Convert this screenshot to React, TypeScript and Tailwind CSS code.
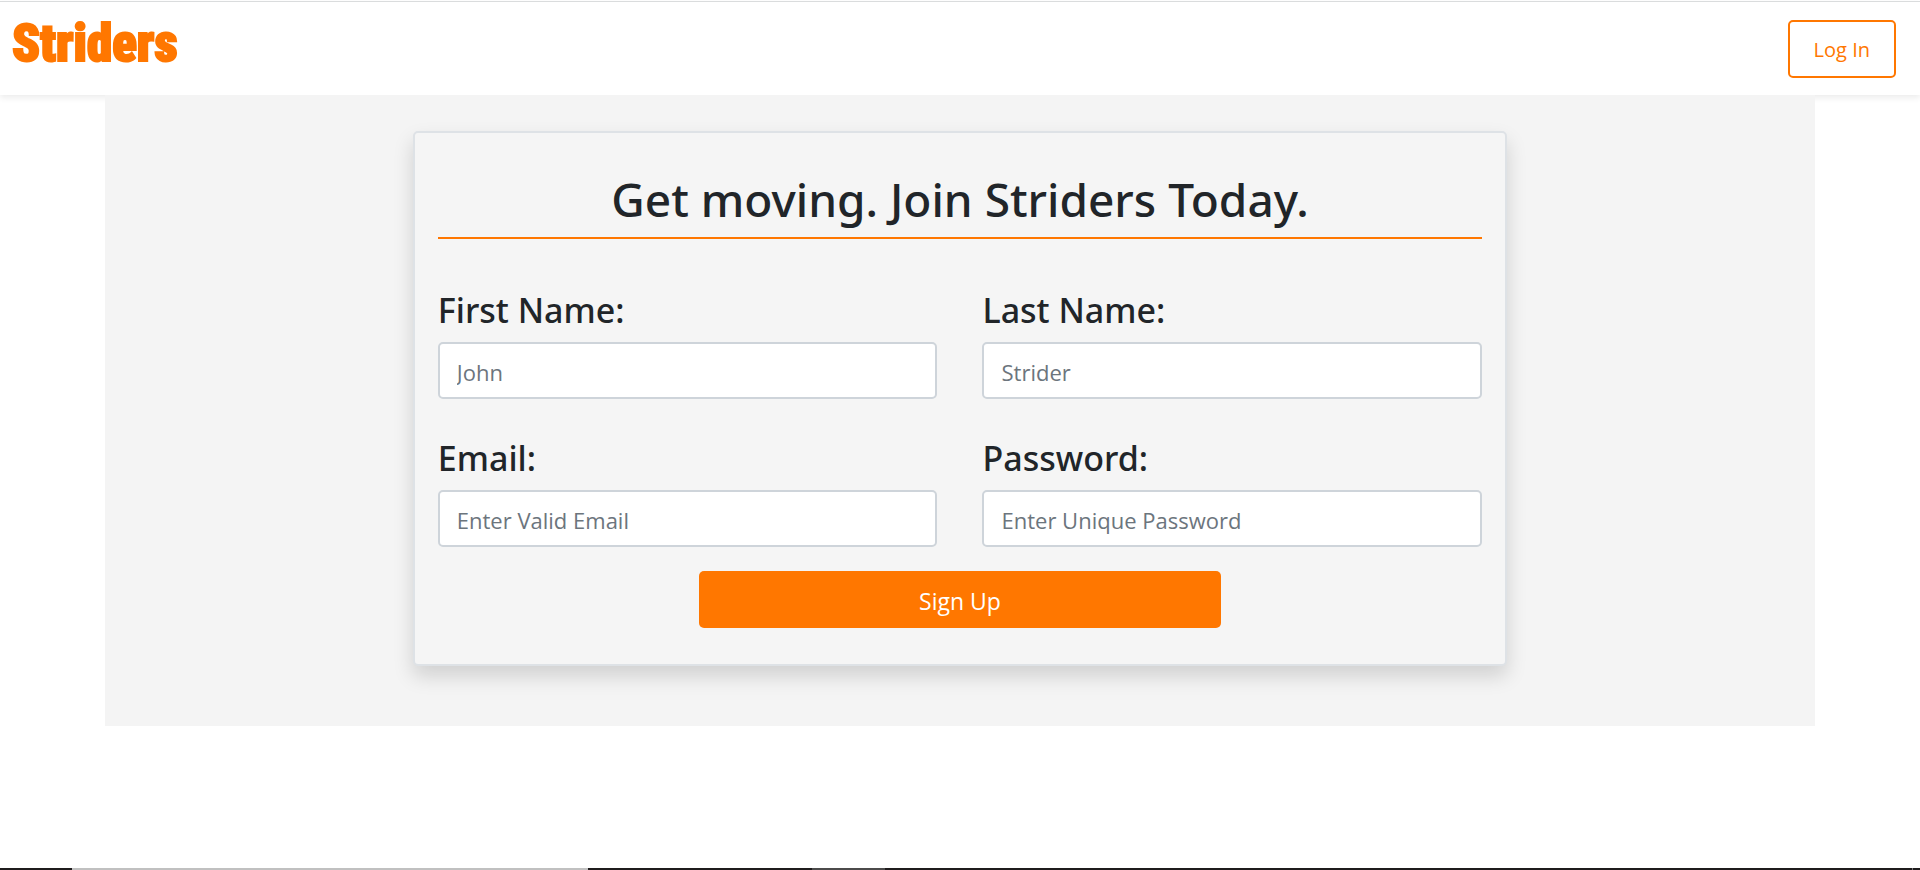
type FieldProps = {
  id: string;
  label: string;
  type: string;
  placeholder: string;
};

const fields: FieldProps[] = [
  { id: "first-name", label: "First Name:", type: "text", placeholder: "John" },
  { id: "last-name", label: "Last Name:", type: "text", placeholder: "Strider" },
  { id: "email", label: "Email:", type: "email", placeholder: "Enter Valid Email" },
  { id: "password", label: "Password:", type: "password", placeholder: "Enter Unique Password" },
];

function Field({ id, label, type, placeholder }: FieldProps) {
  return (
    <div className="flex flex-col gap-3">
      <label htmlFor={id} className="font-['Noto_Sans',sans-serif] text-[34px] leading-[39px] font-medium">
        {label}
      </label>
      <input
        id={id}
        type={type}
        placeholder={placeholder}
        className="h-[57px] w-full rounded-[5px] border-2 border-[#ced4da] bg-white px-[17px] pt-0.5 text-[22px] placeholder:text-[#6c757d]"
      />
    </div>
  );
}

function NavBar() {
  return (
    <header className="flex h-[94px] items-start justify-between border-t border-[#dadcdd] bg-white pr-6 pl-3 shadow-[0_3px_6px_rgba(0,0,0,0.075)]">
      <a
        href="#"
        className="mt-2.5 font-['Roboto_Condensed','Roboto',sans-serif] text-[51px] leading-[64px] font-black text-[#ff7700] [-webkit-text-stroke:2px_#ff7700]"
      >
        Striders
      </a>
      <button
        type="button"
        className="mt-[18px] h-[58px] rounded-[5px] border-2 border-[#ff7700] px-6 pt-0.5 text-[20px] text-[#ff7700]"
      >
        Log In
      </button>
    </header>
  );
}

function SignUpCard() {
  return (
    <form
      onSubmit={(event) => event.preventDefault()}
      className="w-[64%] rounded-[5px] border-2 border-[#dee2e6] bg-[#f5f5f5] px-[23px] pt-9 pb-9 shadow-[0_10px_20px_rgba(0,0,0,0.15)]"
    >
      <h1 className="border-b-2 border-[#ff7700] pb-2 text-center font-['Noto_Sans',sans-serif] text-[46px] leading-[60px] font-medium">
        Get moving. Join Striders Today.
      </h1>
      <div className="mt-[52px] grid grid-cols-2 gap-x-[45px] gap-y-10">
        {fields.map((field) => (
          <Field key={field.id} {...field} />
        ))}
      </div>
      <button
        type="submit"
        className="mx-auto mt-6 block h-[57px] w-1/2 rounded-[5px] bg-[#ff7700] pt-1 text-[23px] text-white"
      >
        Sign Up
      </button>
    </form>
  );
}

function BottomEdge() {
  return (
    <div aria-hidden="true" className="mt-auto flex h-0.5 bg-[#1f1c1d]">
      <div className="ml-[3.75%] w-[26.9%] bg-[#c0c0c0]" />
      <div className="ml-[11.65%] w-[3.8%] bg-[#4c4b4b]" />
      <div className="mr-[7px] ml-auto w-px bg-[#777777]" />
    </div>
  );
}

export default function App() {
  return (
    <div className="flex min-h-screen flex-col bg-white font-['Open_Sans','Noto_Sans',sans-serif] text-[#212529]">
      <div className="h-px" />
      <NavBar />
      <main className="mx-[105px] flex justify-center bg-[#f4f4f4] pt-9 pb-[60px]">
        <SignUpCard />
      </main>
      <BottomEdge />
    </div>
  );
}
